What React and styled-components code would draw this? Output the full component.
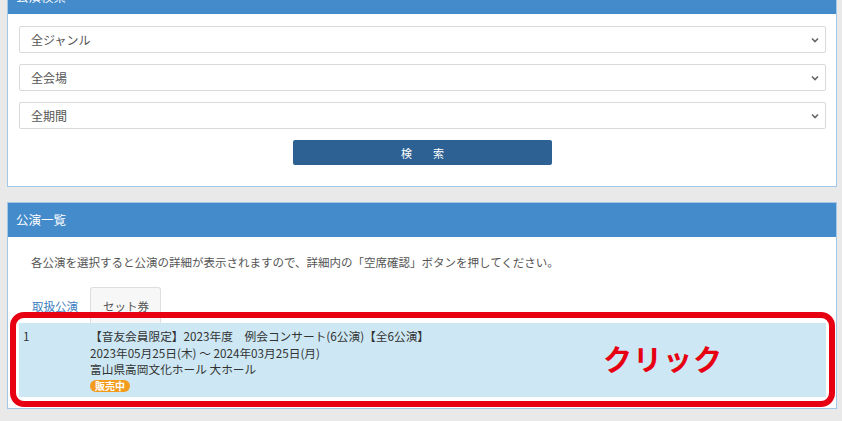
import React from "react";
import styled, { createGlobalStyle } from "styled-components";

const GlobalStyle = createGlobalStyle`
  html, body {
    margin: 0;
    padding: 0;
    background: #e9e9e9;
    font-family: "Noto Sans CJK JP", "Noto Sans", sans-serif;
    overflow: hidden;
  }
`;

const selects = ["全ジャンル", "全会場", "全期間"];

const performance = {
  no: 1,
  title: "【音友会員限定】2023年度　例会コンサート(6公演)【全6公演】",
  period: "2023年05月25日(木) ～ 2024年03月25日(月)",
  venue: "富山県高岡文化ホール 大ホール",
  status: "販売中",
};

const Chevron = () => (
  <svg width="8" height="6" viewBox="0 0 8 6">
    <path d="M1 1.5 L4 4.5 L7 1.5" fill="none" stroke="#666" strokeWidth="1.6" />
  </svg>
);

const App = () => {
  return (
    <Page>
      <GlobalStyle />
      <Panel>
        <PanelHeader>公演検索</PanelHeader>
        <SearchBody>
          {selects.map((label) => (
            <SelectBox key={label}>
              <span>{label}</span>
              <Chevron />
            </SelectBox>
          ))}
          <ButtonRow>
            <SearchButton>検　索</SearchButton>
          </ButtonRow>
        </SearchBody>
      </Panel>

      <Panel>
        <PanelHeader>公演一覧</PanelHeader>
        <ListBody>
          <Intro>
            各公演を選択すると公演の詳細が表示されますので、詳細内の「空席確認」ボタンを押してください。
          </Intro>
          <Tabs>
            <TabLink>取扱公演</TabLink>
            <TabLink $active>セット券</TabLink>
          </Tabs>
          <RowWrap>
            <Row>
              <RowNo>{performance.no}</RowNo>
              <RowInfo>
                <div>{performance.title}</div>
                <div>{performance.period}</div>
                <div>{performance.venue}</div>
                <Badge>{performance.status}</Badge>
              </RowInfo>
            </Row>
            <Highlight />
            <ClickLabel>クリック</ClickLabel>
          </RowWrap>
        </ListBody>
      </Panel>
    </Page>
  );
};

export default App;

const Page = styled.div`
  padding: 0 5px 0 7px;
  margin-top: -21px;
`;

const Panel = styled.section`
  background: #fff;
  border: 1px solid #a3c7e7;
  margin-bottom: 15px;
`;

const PanelHeader = styled.div`
  height: 34px;
  background: #438bca;
  color: #fff;
  font-size: 12.5px;
  line-height: 34px;
  padding-left: 8px;
`;

const SearchBody = styled.div`
  display: flex;
  flex-direction: column;
  gap: 11px;
  padding: 12px 10px 21px 11px;
`;

const SelectBox = styled.div`
  height: 27px;
  box-sizing: border-box;
  border: 1px solid #d9d9d9;
  border-radius: 2px;
  display: flex;
  align-items: center;
  justify-content: space-between;
  padding: 0 6px 0 11px;
  font-size: 12px;
  color: #555;
`;

const ButtonRow = styled.div`
  display: flex;
  justify-content: center;
`;

const SearchButton = styled.button`
  width: 259px;
  height: 25px;
  border: none;
  border-radius: 2px;
  background: #2d6193;
  color: #fff;
  font-family: inherit;
  font-size: 11px;
  letter-spacing: 5px;
  padding: 0 0 0 5px;
`;

const ListBody = styled.div`
  padding: 15px 10px 11px 11px;
`;

const Intro = styled.p`
  margin: 0 0 15px 12px;
  font-size: 11.5px;
  line-height: 20px;
  color: #555;
`;

const Tabs = styled.div`
  display: flex;
  height: 36px;
`;

const TabLink = styled.div`
  padding: 0 11px 0 12px;
  display: flex;
  align-items: center;
  font-size: 11.5px;
  color: ${({ $active }) => ($active ? "#555" : "#3b80c0")};
  background: ${({ $active }) => ($active ? "#f7f7f7" : "transparent")};
  border: 1px solid ${({ $active }) => ($active ? "#dedede" : "transparent")};
  border-bottom: none;
  border-radius: 3px 3px 0 0;
`;

const RowWrap = styled.div`
  position: relative;
`;

const Row = styled.div`
  display: grid;
  grid-template-columns: 67px 1fr;
  background: #cde8f4;
  padding: 5px 4px 5px 4px;
  font-size: 11.7px;
  line-height: 16.5px;
  color: #333;
`;

const RowNo = styled.div``;

const RowInfo = styled.div`
  display: flex;
  flex-direction: column;
  align-items: flex-start;
`;

const Badge = styled.span`
  margin-top: 2px;
  background: #f29b1d;
  color: #fff;
  font-size: 10px;
  font-weight: bold;
  line-height: 12px;
  padding: 0 5px;
  border-radius: 7px;
`;

const Highlight = styled.div`
  position: absolute;
  top: -11px;
  left: -9px;
  right: -9px;
  bottom: -10px;
  border: 6px solid #e60012;
  border-radius: 14px;
  pointer-events: none;
`;

const ClickLabel = styled.div`
  position: absolute;
  left: 584px;
  top: 18px;
  font-size: 29px;
  line-height: 34px;
  font-weight: bold;
  color: #e60012;
  letter-spacing: 1px;
`;
